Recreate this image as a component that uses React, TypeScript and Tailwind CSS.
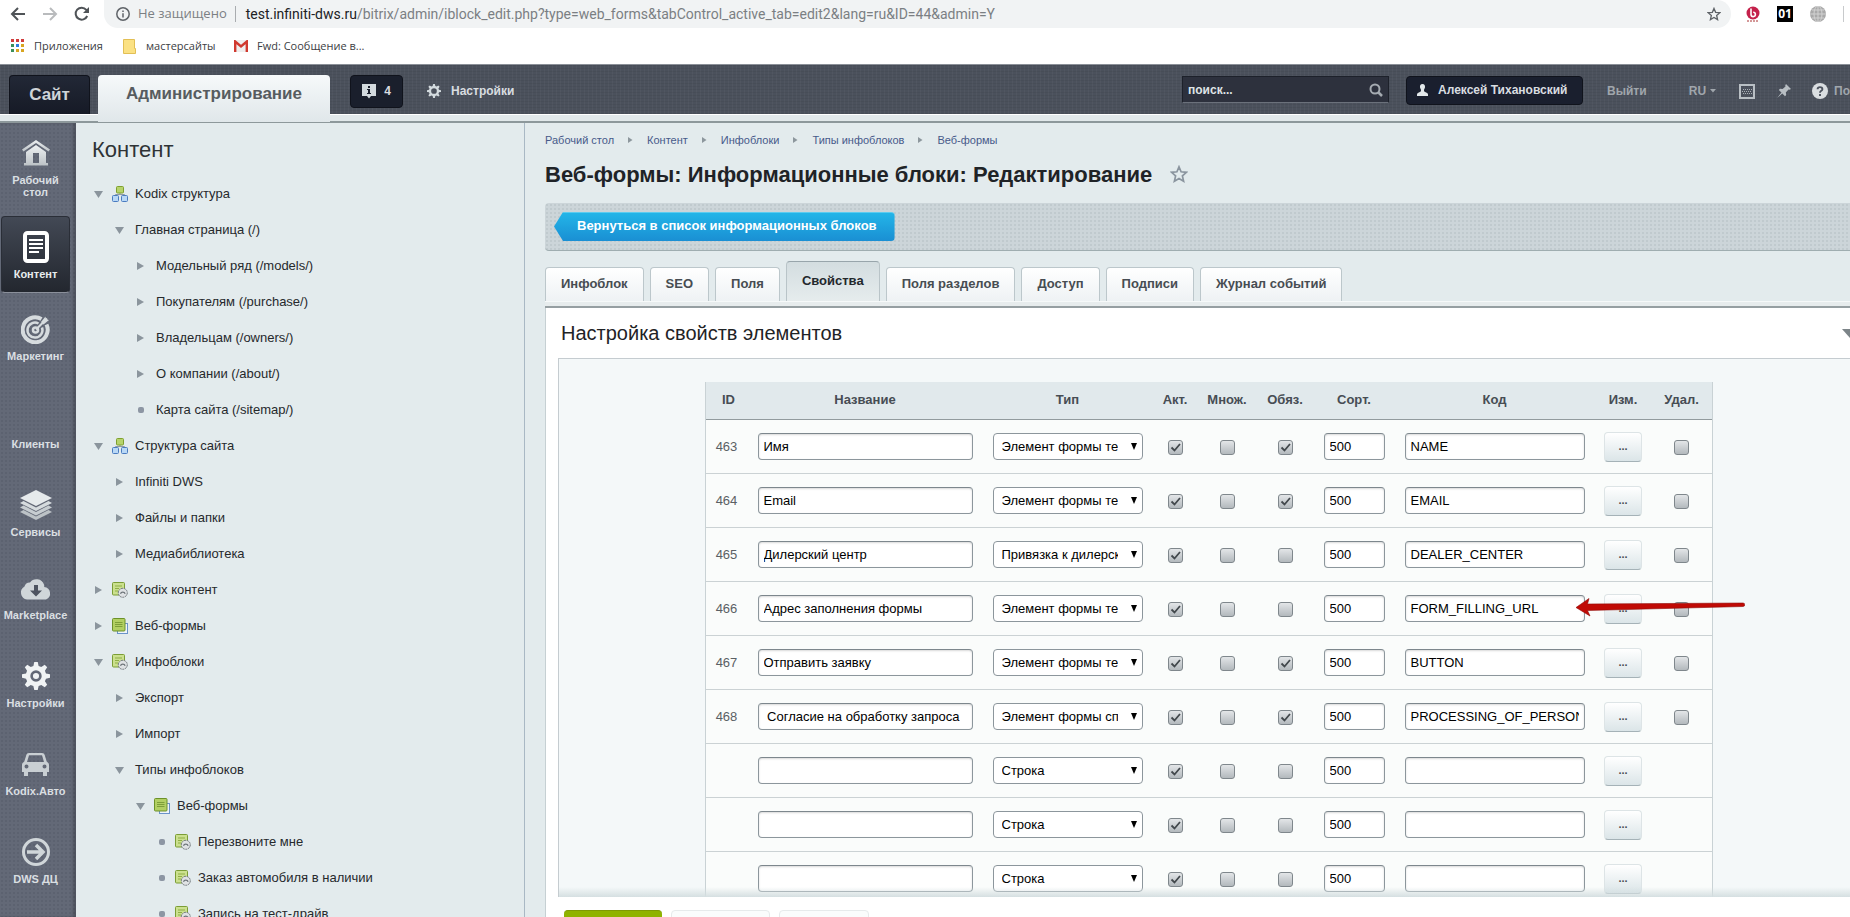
import React, { useState } from 'react';

type Marker = 'open' | 'closed' | 'dot';
type TreeIconName = 'structure' | 'settings' | 'forms';

interface TreeNode {
  label: string;
  level: number;
  marker: Marker;
  icon?: TreeIconName;
}

interface Property {
  id: string;
  name: string;
  type: string;
  active: boolean;
  multiple: boolean;
  required: boolean;
  code: string;
}

const TREE: TreeNode[] = [
  { label: 'Kodix структура', level: 0, marker: 'open', icon: 'structure' },
  { label: 'Главная страница (/)', level: 1, marker: 'open' },
  { label: 'Модельный ряд (/models/)', level: 2, marker: 'closed' },
  { label: 'Покупателям (/purchase/)', level: 2, marker: 'closed' },
  { label: 'Владельцам (/owners/)', level: 2, marker: 'closed' },
  { label: 'О компании (/about/)', level: 2, marker: 'closed' },
  { label: 'Карта сайта (/sitemap/)', level: 2, marker: 'dot' },
  { label: 'Структура сайта', level: 0, marker: 'open', icon: 'structure' },
  { label: 'Infiniti DWS', level: 1, marker: 'closed' },
  { label: 'Файлы и папки', level: 1, marker: 'closed' },
  { label: 'Медиабиблиотека', level: 1, marker: 'closed' },
  { label: 'Kodix контент', level: 0, marker: 'closed', icon: 'settings' },
  { label: 'Веб-формы', level: 0, marker: 'closed', icon: 'forms' },
  { label: 'Инфоблоки', level: 0, marker: 'open', icon: 'settings' },
  { label: 'Экспорт', level: 1, marker: 'closed' },
  { label: 'Импорт', level: 1, marker: 'closed' },
  { label: 'Типы инфоблоков', level: 1, marker: 'open' },
  { label: 'Веб-формы', level: 2, marker: 'open', icon: 'forms' },
  { label: 'Перезвоните мне', level: 3, marker: 'dot', icon: 'settings' },
  { label: 'Заказ автомобиля в наличии', level: 3, marker: 'dot', icon: 'settings' },
  { label: 'Запись на тест-драйв', level: 3, marker: 'dot', icon: 'settings' },
];

const LEVEL_PADDING = ['pl-[14px]', 'pl-[35px]', 'pl-[56px]', 'pl-[77px]'];

const PROPERTIES: Property[] = [
  { id: '463', name: 'Имя', type: 'Элемент формы текстовый', active: true, multiple: false, required: true, code: 'NAME' },
  { id: '464', name: 'Email', type: 'Элемент формы текстовый', active: true, multiple: false, required: true, code: 'EMAIL' },
  { id: '465', name: 'Дилерский центр', type: 'Привязка к дилерскому центру', active: true, multiple: false, required: false, code: 'DEALER_CENTER' },
  { id: '466', name: 'Адрес заполнения формы', type: 'Элемент формы текстовый', active: true, multiple: false, required: false, code: 'FORM_FILLING_URL' },
  { id: '467', name: 'Отправить заявку', type: 'Элемент формы текстовый', active: true, multiple: false, required: true, code: 'BUTTON' },
  { id: '468', name: ' Согласие на обработку запроса', type: 'Элемент формы список', active: true, multiple: false, required: true, code: 'PROCESSING_OF_PERSONAL_DATA' },
  { id: '', name: '', type: 'Строка', active: true, multiple: false, required: false, code: '' },
  { id: '', name: '', type: 'Строка', active: true, multiple: false, required: false, code: '' },
  { id: '', name: '', type: 'Строка', active: true, multiple: false, required: false, code: '' },
];

const TABS = ['Инфоблок', 'SEO', 'Поля', 'Свойства', 'Поля разделов', 'Доступ', 'Подписи', 'Журнал событий'];
const CRUMBS = ['Рабочий стол', 'Контент', 'Инфоблоки', 'Типы инфоблоков', 'Веб-формы'];

const GEAR =
  'M14 0h4l1 4.6 3 1.2 4-2.6 2.8 2.8-2.6 4 1.2 3 4.6 1v4l-4.6 1-1.2 3 2.6 4-2.8 2.8-4-2.6-3 1.2-1 4.6h-4l-1-4.6-3-1.2-4 2.6L3.2 26l2.6-4-1.2-3L0 18v-4l4.6-1 1.2-3-2.6-4L6 3.2l4 2.6 3-1.2zM16 9.5a6.5 6.5 0 1 0 0 13a6.5 6.5 0 1 0 0-13z';

const MENU = [
  { label: 'Рабочий стол', icon: 'home', height: 'h-[93px]' },
  { label: 'Контент', icon: 'content', height: 'h-[83px]' },
  { label: 'Маркетинг', icon: 'target', height: 'h-[88px]' },
  { label: 'Клиенты', icon: '', height: 'h-[88px]' },
  { label: 'Сервисы', icon: 'layers', height: 'h-[83px]' },
  { label: 'Marketplace', icon: 'cloud', height: 'h-[88px]' },
  { label: 'Настройки', icon: 'gear', height: 'h-[88px]' },
  { label: 'Kodix.Авто', icon: 'car', height: 'h-[88px]' },
  { label: 'DWS ДЦ', icon: 'arrow', height: 'h-[88px]' },
];

export default function App() {
  return (
    <div className="flex h-screen flex-col overflow-hidden bg-[#e3ebed] font-['Liberation_Sans',Arial,sans-serif] text-[13px] text-[#26292c]">
      <BrowserBar />
      <TopPanel />
      <div className="flex min-h-0 flex-1">
        <SideMenu />
        <Tree />
        <Editor />
      </div>
    </div>
  );
}

function BrowserBar() {
  return (
    <div className="shrink-0 bg-white font-['Open_Sans','Noto_Sans',sans-serif]">
      <div className="flex h-7 items-center pl-2.5">
        <div className="flex w-[94px] items-center gap-4">
          <button aria-label="Назад">
            <svg width="16" height="16" viewBox="0 0 16 16" fill="none" stroke="#4f5357" strokeWidth="2">
              <path d="M15 8H2.5M8 2L2 8l6 6" />
            </svg>
          </button>
          <button aria-label="Вперёд">
            <svg width="16" height="16" viewBox="0 0 16 16" fill="none" stroke="#b9bbbd" strokeWidth="2">
              <path d="M1 8h12.500M8 2l6 6-6 6" />
            </svg>
          </button>
          <button aria-label="Обновить">
            <svg width="16" height="16" viewBox="0 0 16 16" fill="none" stroke="#4f5357" strokeWidth="2">
              <path d="M13.200 10A6 6 0 1 1 12.300 3.800L14 5.500" />
              <path d="M15 1v6H9z" fill="#4f5357" stroke="none" />
            </svg>
          </button>
        </div>
        <div className="flex h-7 flex-1 items-center rounded-r-full rounded-bl-full bg-[#f1f3f4] pr-2.5 pl-3 text-[13px] text-[#7b7f83]">
          <svg className="shrink-0" width="14" height="14" viewBox="0 0 14 14" fill="none" stroke="#5f6368" strokeWidth="1.500">
            <circle cx="7" cy="7" r="6.200" />
            <path d="M7 6.200v4.300M7 3.500v1.500" />
          </svg>
          <span className="ml-2">Не защищено</span>
          <span className="mr-2.5 ml-2 h-4 w-px bg-[#a9acaf]" />
          <p className="flex-1 font-[Roboto,sans-serif] text-[14px] whitespace-nowrap">
            <span className="text-[#202124]">test.infiniti-dws.ru</span>
            /bitrix/admin/iblock_edit.php?type=web_forms&amp;tabControl_active_tab=edit2&amp;lang=ru&amp;ID=44&amp;admin=Y
          </p>
          <Star size={14} color="#5f6368" />
        </div>
        <div className="flex w-[119px] items-center gap-[17px] pl-[15px]">
          <svg width="14" height="16" viewBox="0 0 14 16">
            <circle cx="7" cy="7" r="6.500" fill="#c4214b" />
            <path d="M5 2.500v6a2.200 2.200 0 1 0 2.200-2.300" fill="none" stroke="#fff" strokeWidth="1.600" />
            <path d="M1 15h12" stroke="#a33" strokeWidth="1" strokeDasharray="2 1" />
          </svg>
          <span className="flex size-4 items-center justify-center bg-black text-[12px] font-bold text-white">01</span>
          <svg width="16" height="16" viewBox="0 0 16 16">
            <circle cx="8" cy="8" r="8" fill="#a9a9a9" />
            <path d="M8 0v16M0 8h16M2 4h12M2 12h12" stroke="#d2d2d2" fill="none" />
            <ellipse cx="8" cy="8" rx="4" ry="8" stroke="#d2d2d2" fill="none" />
          </svg>
          <span className="h-4 w-px bg-[#c8cacc]" />
        </div>
      </div>
      <div className="flex h-9 items-center pl-[11px] text-[11px] text-[#3c4043]">
        <svg width="14" height="14" viewBox="0 0 14 14">
          <path d="M0 0h3v3H0zM5 0h3v3H5zM10 0h3v3h-3z" fill="#d13c3c" />
          <path d="M0 5h3v3H0z" fill="#3a8f5b" />
          <path d="M5 5h3v3H5z" fill="#2f7de0" />
          <path d="M10 5h3v3h-3z" fill="#d8a520" />
          <path d="M0 10h3v3H0z" fill="#3a8f5b" />
          <path d="M5 10h3v3H5zM10 10h3v3h-3z" fill="#d8a520" />
        </svg>
        <a href="#" className="ml-[9px] w-[89px]">Приложения</a>
        <svg width="13" height="15" viewBox="0 0 13 15">
          <path d="M.5.500h11v9h1v5H.5z" fill="#fbe183" stroke="#e2bf55" />
        </svg>
        <a href="#" className="ml-[10px] w-[88px]">мастерсайты</a>
        <svg width="14" height="12" viewBox="0 0 14 12">
          <path d="M0 0h14v12H0z" fill="#eee" />
          <path d="M1.200 12V1.500L7 6.500l5.800-5V12" fill="none" stroke="#d0392f" strokeWidth="2.400" />
        </svg>
        <a href="#" className="ml-[9px]">Fwd: Сообщение в...</a>
      </div>
    </div>
  );
}

function TopPanel() {
  return (
    <header className="shrink-0">
      <div className="flex h-[50px] items-start border-t border-[#8b9098] bg-[#4b515c] bg-[repeating-linear-gradient(0deg,rgba(0,0,0,0.05)_0_1px,transparent_1px_3px),repeating-linear-gradient(90deg,rgba(255,255,255,0.03)_0_1px,transparent_1px_4px)] pl-[9px] text-[12px] font-bold text-[#d9dde0]">
        <a href="#" className="mt-2.5 flex h-[39px] w-[81px] items-center justify-center rounded-t border border-b-0 border-[#10131c] bg-linear-to-b from-[#222836] to-[#161a26] text-[17px] text-[#cfd4d8]">
          Сайт
        </a>
        <a href="#" className="relative z-10 mt-2.5 ml-2 flex h-[47px] w-[232px] justify-center rounded-t bg-linear-to-b from-[#f6f9fa] to-[#e0e7ea] pt-1.5 text-[17px] text-[#575c60]">
          Администрирование
        </a>
        <a href="#" className="mt-2.5 ml-5 flex h-[33px] w-[53px] items-center justify-center gap-2 rounded border border-[#10131c] bg-[#1a1f2c] pb-px">
          <svg width="14" height="15" viewBox="0 0 14 15">
            <path d="M0 0h14v12H9l-2 2.500L5 12H0z" fill="#d3dade" />
            <path d="M6 2h2v2H6zM5 5h3v4h1v1H5V9h1V6H5z" fill="#1a1f2c" />
          </svg>
          4
        </a>
        <a href="#" className="mt-2.5 ml-6 flex h-8 items-center gap-2.5">
          <svg width="14" height="14" viewBox="0 0 32 32" fill="#d3dade">
            <path fillRule="evenodd" d={GEAR} />
          </svg>
          Настройки
        </a>
        <label className="mt-[11px] ml-auto flex h-[27px] w-[207px] items-center border border-[#1d212a] border-b-[#6b717b] bg-[#2d313d] px-[5px]">
          <input aria-label="Поиск" placeholder="поиск..." className="min-w-0 flex-1 text-[12px] font-bold outline-none placeholder:text-[#dfe3e6]" />
          <svg width="14" height="14" viewBox="0 0 14 14" fill="none" stroke="#a5abb1" strokeWidth="2">
            <circle cx="6" cy="6" r="4.500" />
            <path d="M9 9l4 4" strokeWidth="2.500" />
          </svg>
        </label>
        <a href="#" className="mt-[11px] ml-[17px] flex h-[29px] w-[177px] items-center gap-2.5 rounded border border-[#10131c] bg-[#1a1f2e] pb-0.5 pl-2.5">
          <svg width="11" height="12" viewBox="0 0 11 12" fill="#e3e8ea">
            <path d="M5.500 0C7.500 0 8.200 1.500 8 3.200 7.800 4.600 7 5 7 6.500c0 2 4 1.800 4 4V12H0v-1.500c0-2.200 4-2 4-4C4 5 3.200 4.600 3 3.200 2.800 1.500 3.500 0 5.500 0z" />
          </svg>
          Алексей Тихановский
        </a>
        <nav className="mt-2.5 ml-6 flex h-8 w-[243px] items-center text-[#a0a6ac]">
          <a href="#" className="w-[83px]">Выйти</a>
          <button className="flex w-[51px] items-center gap-1">
            RU
            <svg width="6" height="4" viewBox="0 0 6 4" fill="#a0a6ac">
              <path d="M0 0h6L3 3.500z" />
            </svg>
          </button>
          <button aria-label="Клавиатура">
            <svg width="16" height="15" viewBox="0 0 16 15" fill="none">
              <path d="M1 1h14v13H1z" stroke="#b9bfc4" strokeWidth="2" />
              <path d="M4 5.500h9M3 7.500h9M4 9.500h9" stroke="#a9afb5" strokeDasharray="1 1" />
            </svg>
          </button>
          <button aria-label="Закрепить" className="ml-[22px]">
            <svg width="14" height="14" viewBox="0 0 14 14" fill="#b9bfc4">
              <path d="M9 0l5 5-1.500.8-1-.3-2.700 2.900.4 2.600-1.200 1.200-2.700-2.800L0 14l4.500-5.400L1.800 6 3 4.700l2.600.4 2.900-2.700-.3-1z" />
            </svg>
          </button>
          <a href="#" className="ml-[21px] flex items-center gap-1.5">
            <svg width="16" height="16" viewBox="0 0 16 16">
              <circle cx="8" cy="8" r="8" fill="#d9dde0" />
              <path d="M5.600 6.300C5.600 3.300 10.400 3.400 10.400 6.200 10.400 8 8 7.700 8 9.800M8 11v2" fill="none" stroke="#4b515c" strokeWidth="1.900" />
            </svg>
            По
          </a>
        </nav>
      </div>
      <div className="h-[9px] border-t border-b-2 border-t-white border-b-[#8d989b] bg-[#e1e8ea]" />
    </header>
  );
}

function SideMenu() {
  return (
    <nav className="w-[76px] shrink-0 overflow-hidden bg-[#636977] bg-[radial-gradient(#5c6270_1px,transparent_1px)] bg-size-[4px_4px] shadow-[inset_-3px_0_3px_rgba(0,0,0,0.2)]">
      {MENU.map((item) => (
        <div key={item.label} className={item.height}>
          <a
            href="#"
            className={`ml-px flex h-[77px] w-[69px] flex-col items-center rounded pt-3.5 text-center text-[11px] leading-3 font-bold ${
              item.label === 'Контент'
                ? 'border border-[#2a2e37] border-b-[#8b909b] bg-linear-to-b from-[#434955] to-[#23272f] text-[#e8ecee]'
                : 'text-[#dadfe2]'
            }`}
          >
            <span className="mb-[5px] flex h-8 shrink-0 items-center">
              <MenuIcon name={item.icon} />
            </span>
            {item.label}
          </a>
        </div>
      ))}
    </nav>
  );
}

function MenuIcon({ name }: { name: string }) {
  if (name === 'home') {
    return (
      <svg width="28" height="26" viewBox="0 0 28 26" fill="url(#metal)">
        <defs>
          <linearGradient id="metal" x1="0" y1="0" x2="0" y2="1">
            <stop offset="0" stopColor="#eef1f2" />
            <stop offset="1" stopColor="#bcc2c6" />
          </linearGradient>
        </defs>
        <path d="M14 0l14 9.500-1.500 2L14 3 1.500 11.500 0 9.500z" />
        <path fillRule="evenodd" d="M14 5l10 7v11h2v2.500H2V23h2V12zM11 13v10h6V13z" />
      </svg>
    );
  }
  if (name === 'content') {
    return (
      <svg width="26" height="32" viewBox="0 0 26 32" fill="none" stroke="#fff">
        <rect x="2" y="2" width="22" height="28" rx="2.500" strokeWidth="4" />
        <path d="M6 9h14M6 13h14M6 17h14M6 21h10" strokeWidth="2" />
      </svg>
    );
  }
  if (name === 'target') {
    return (
      <svg width="29" height="29" viewBox="0 0 29 29" fill="none" stroke="#d6dbde">
        <path d="M20.500 4A12.500 12.500 0 1 0 25.500 9.500" strokeWidth="4" />
        <path d="M17.500 8.500A7.500 7.500 0 1 0 21 12.500" strokeWidth="2.500" />
        <circle cx="14.500" cy="15" r="2.500" strokeWidth="2.500" />
        <path d="M15 14.500L26 3.500" strokeWidth="2.200" />
        <path d="M20 7l4.500-5.500.5 3 3 .5-5.500 4.500z" fill="#d6dbde" stroke="none" />
      </svg>
    );
  }
  if (name === 'layers') {
    return (
      <svg width="32" height="30" viewBox="0 0 32 30" fill="#d6dbde">
        <path d="M16 0l16 8-16 8L0 8z" fill="#e6eaec" />
        <path d="M0 13l3.500-2L16 17.500 28.500 11l3.500 2-16 8z" />
        <path d="M0 17.500l3.500-2L16 22l12.500-6.500 3.500 2-16 8z" fill="#c6ccd0" />
        <path d="M0 22l3.500-2L16 26.500 28.500 20l3.500 2-16 8z" fill="#bcc2c6" />
      </svg>
    );
  }
  if (name === 'cloud') {
    return (
      <svg width="32" height="23" viewBox="0 0 32 23">
        <path d="M7 22.500a7 7 0 0 1-2.500-13A5.500 5.500 0 0 1 10 5.500 8 8 0 0 1 24 7.500c.3 1 .3 1.500.2 2.500A6.500 6.500 0 0 1 26 22.500z" fill="#d0d6d9" />
        <path d="M14 8h4v5.500h4L16 19.500l-6-6h4z" fill="#4e5460" />
      </svg>
    );
  }
  if (name === 'gear') {
    return (
      <svg width="28" height="28" viewBox="0 0 32 32" fill="#f0f3f4">
        <path fillRule="evenodd" d={GEAR} />
        <circle cx="16" cy="16" r="3.500" />
      </svg>
    );
  }
  if (name === 'car') {
    return (
      <svg width="27" height="23" viewBox="0 0 27 23" fill="#c9cfd3">
        <path
          fillRule="evenodd"
          d="M7 0h13c1.500 0 2.300.8 2.700 2l2 6.500C26 9.500 27 10.500 27 12v7h-2v4h-4v-4H6v4H2v-4H0v-7c0-1.500 1-2.500 2.300-3.500l2-6.500C4.700.8 5.500 0 7 0zM7 2.200L5 9h17l-2-6.800zM4.500 11.500a2 2 0 1 0 0 4 2 2 0 1 0 0-4zM22.500 11.500a2 2 0 1 0 0 4 2 2 0 1 0 0-4z"
        />
      </svg>
    );
  }
  if (name === 'arrow') {
    return (
      <svg width="28" height="28" viewBox="0 0 28 28" fill="none" stroke="#d0d6d9" strokeWidth="3">
        <circle cx="14" cy="14" r="12.500" />
        <path d="M5 14h15M14 7l7 7-7 7" strokeWidth="3.500" />
      </svg>
    );
  }
  return null;
}

function Tree() {
  return (
    <aside className="w-[449px] shrink-0 overflow-hidden border-r border-[#a9b8c4]">
      <h2 className="h-[53px] pl-4 text-[22px] leading-[54px] text-[#2f3336]">Контент</h2>
      <ul>
        {TREE.map((node, i) => (
          <li key={i} className={`flex h-9 items-center ${LEVEL_PADDING[node.level]}`}>
            <span className="flex w-[17px] justify-center">
              <TreeMarker marker={node.marker} />
            </span>
            {node.icon && (
              <span className="ml-[5px]">
                <TreeIcon name={node.icon} />
              </span>
            )}
            <a href="#" className="ml-[7px]">
              {node.label}
            </a>
          </li>
        ))}
      </ul>
    </aside>
  );
}

function TreeMarker({ marker }: { marker: Marker }) {
  if (marker === 'dot') return <span className="size-1.5 rounded-[2px] bg-[#8d96a3]" />;
  return (
    <svg width="9" height="8" viewBox="0 0 9 8" fill="#8b959d">
      <path d={marker === 'open' ? 'M0 1h9L4.500 8z' : 'M1 0l7 4-7 4z'} />
    </svg>
  );
}

function TreeIcon({ name }: { name: TreeIconName }) {
  if (name === 'structure') {
    return (
      <svg width="16" height="16" viewBox="0 0 16 16">
        <path d="M8 7v2M3.500 10V8.500h9V10" fill="none" stroke="#8f9aa3" />
        <rect x="4.500" y=".5" width="7" height="6.500" rx="1" fill="#b6d36b" stroke="#7fa02f" />
        <rect x=".5" y="9.500" width="6" height="6" rx="1" fill="#b9d8f6" stroke="#4a7cc0" />
        <rect x="9.500" y="9.500" width="6" height="6" rx="1" fill="#b9d8f6" stroke="#4a7cc0" />
      </svg>
    );
  }
  if (name === 'forms') {
    return (
      <svg width="16" height="16" viewBox="0 0 16 16">
        <rect x="5.500" y="5.500" width="10" height="10" fill="#eef4fa" stroke="#6b93c9" />
        <rect x=".5" y=".5" width="12.500" height="12.500" rx="1" fill="#b2cf62" stroke="#6c9128" />
        <path d="M3 4.500h7.500M3 6.500h7.500M3 8.500h7.500" stroke="#7d9e38" />
      </svg>
    );
  }
  return (
    <svg width="16" height="16" viewBox="0 0 16 16">
      <rect x=".5" y=".5" width="12" height="12.500" rx="1" fill="#cbe08e" stroke="#7b9d35" />
      <path d="M3 4h7M3 6.500h4M3 9h3" stroke="#8fae45" />
      <circle cx="10.800" cy="10.800" r="4.500" fill="#dfe2e4" stroke="#6d7479" strokeDasharray="2 .7" />
      <path d="M8.500 11.800a2.400 2.400 0 0 1 4.600 0" fill="none" stroke="#6d7479" strokeWidth="1.300" />
    </svg>
  );
}

function Editor() {
  const [activeTab, setActiveTab] = useState('Свойства');

  return (
    <main className="-mr-2 flex min-w-0 flex-1 flex-col pl-5">
      <nav className="flex h-[34px] shrink-0 items-center text-[11px] text-[#475a8a]">
        {CRUMBS.map((crumb, i) => (
          <React.Fragment key={crumb}>
            {i > 0 && (
              <svg className="mx-3.5" width="5" height="6" viewBox="0 0 5 6" fill="#8d979d">
                <path d="M0 0l4.500 3L0 6z" />
              </svg>
            )}
            <a href="#">{crumb}</a>
          </React.Fragment>
        ))}
      </nav>

      <div className="mb-3 flex h-[34px] shrink-0 items-center gap-[18px]">
        <h1 className="text-[22px] font-bold text-[#1f2327]">Веб-формы: Информационные блоки: Редактирование</h1>
        <Star size={18} color="#8b959f" />
      </div>

      {/* Toolbar */}
      <div className="flex h-12 shrink-0 items-center rounded-l border-b border-[#9fadb0] bg-[#ccd5d9] bg-[radial-gradient(#c0cace_1px,transparent_1px)] bg-size-[4px_4px] pl-[9px]">
        <a
          href="#"
          className="flex h-[29px] items-center rounded-r-sm border-t border-[#5cccf0] bg-linear-to-b from-[#24b5e8] to-[#1a8fd3] pr-[18px] pb-0.5 pl-[23px] font-bold text-white [clip-path:polygon(9px_0,100%_0,100%_100%,9px_100%,0_50%)]"
        >
          Вернуться в список информационных блоков
        </a>
      </div>

      {/* Tabs */}
      <div className="mt-2.5 flex h-10 shrink-0 items-end gap-1.5">
        {TABS.map((tab) => (
          <button
            key={tab}
            onClick={() => setActiveTab(tab)}
            className={`rounded-t border border-b-0 px-[15px] pb-0.5 font-bold ${
              tab === activeTab
                ? 'h-10 border-[#b9c4c8] border-t-[#98a5ab] bg-linear-to-b from-[#d3dde0] to-[#e6eced] text-[#23282c]'
                : 'h-[34px] border-[#bcc7cb] bg-linear-to-b from-white to-[#eef2f4] text-[#474d52]'
            }`}
          >
            {tab}
          </button>
        ))}
      </div>
      <div className="h-[7px] shrink-0 border-t border-b-2 border-t-[#f6f9f9] border-b-[#969fa2] bg-[#e7eced]" />

      <section className="flex min-h-0 flex-1 flex-col overflow-hidden border-l border-[#c6d0d3] bg-white">
        <div className="flex h-[50px] shrink-0 items-center pl-[15px]">
          <h2 className="text-[20px] text-[#1f2326]">Настройка свойств элементов</h2>
          <button aria-label="Свернуть" className="ml-auto">
            <svg width="16" height="9" viewBox="0 0 16 9" fill="#7c8488">
              <path d="M0 0h16L8 9z" />
            </svg>
          </button>
        </div>
        <div className="relative ml-3 min-h-0 flex-1 overflow-hidden border-t border-l border-[#c5ccd0] bg-[#f4f8f9] pt-[23px]">
          <PropertyTable />
          <div className="absolute inset-x-0 bottom-0 z-20 h-2.5 bg-linear-to-b from-transparent to-[#d5dfe1]" />
        </div>
        <div className="flex h-5 shrink-0 gap-[9px] overflow-hidden bg-white pt-[13px] pl-[18px]">
          <button aria-label="Сохранить" className="h-8 w-[98px] shrink-0 rounded border-t border-[#7d9a05] bg-[#8fb300]" />
          <button aria-label="Применить" className="h-8 w-[99px] shrink-0 rounded border border-[#e6eaeb] bg-[#fafcfc]" />
          <button aria-label="Отменить" className="h-8 w-[90px] shrink-0 rounded border border-[#e6eaeb] bg-[#fafcfc]" />
        </div>
      </section>
    </main>
  );
}

function PropertyTable() {
  return (
    <table className="mx-auto w-[1008px] table-fixed border-separate border-spacing-0 border-x border-[#c9d2d5] bg-[#fafcfb] text-center">
      <colgroup>
        <col className="w-[42px]" />
        <col className="w-[235px]" />
        <col className="w-[170px]" />
        <col className="w-[45px]" />
        <col className="w-[59px]" />
        <col className="w-[57px]" />
        <col className="w-[81px]" />
        <col className="w-[200px]" />
        <col className="w-[57px]" />
        <col className="w-[60px]" />
      </colgroup>
      <thead>
        <tr className="h-[38px] text-[#474d54]">
          {['ID', 'Название', 'Тип', 'Акт.', 'Множ.', 'Обяз.', 'Сорт.', 'Код', 'Изм.', 'Удал.'].map((title) => (
            <th key={title} className="border-b border-[#929b9e] bg-[#e1e9ec] p-0 pb-0.5 font-bold first:pl-1">
              {title}
            </th>
          ))}
        </tr>
      </thead>
      <tbody>
        {PROPERTIES.map((prop, i) => (
          <PropertyRow key={i} prop={prop} />
        ))}
      </tbody>
    </table>
  );
}

const CELL = 'border-b border-[#cbd2d4] p-0';
const INPUT =
  'h-[27px] rounded border border-[#8c969c] border-t-[#7d878d] bg-white px-[5px] align-middle text-black shadow-[inset_0_1px_2px_rgba(0,0,0,0.15)] outline-none';

function PropertyRow({ prop }: { prop: Property }) {
  return (
    <tr className="h-[54px]">
      <td className={`${CELL} text-[#5a6064]`}>{prop.id}</td>
      <td className={CELL}>
        <input aria-label="Название" defaultValue={prop.name} className={`${INPUT} w-[215px]`} />
      </td>
      <td className={CELL}>
        <span className="relative inline-block align-middle">
          <select aria-label="Тип" className="block h-[27px] w-[150px] appearance-none rounded border border-[#8c969c] bg-white pr-6 pl-2 text-black outline-none">
            <option>{prop.type}</option>
          </select>
          <svg className="pointer-events-none absolute top-2.5 right-1.5" width="6" height="7" viewBox="0 0 6 7">
            <path d="M0 0h6L3 7z" />
          </svg>
        </span>
      </td>
      <td className={CELL}>
        <Checkbox label="Акт." checked={prop.active} />
      </td>
      <td className={CELL}>
        <Checkbox label="Множ." checked={prop.multiple} />
      </td>
      <td className={CELL}>
        <Checkbox label="Обяз." checked={prop.required} />
      </td>
      <td className={CELL}>
        <input aria-label="Сорт." defaultValue="500" className={`${INPUT} w-[61px]`} />
      </td>
      <td className={`${CELL} relative`}>
        <input aria-label="Код" defaultValue={prop.code} className={`${INPUT} w-[180px]`} />
        {prop.id === '466' && (
          <svg className="pointer-events-none absolute top-4 left-[181px] z-10" width="169" height="20" viewBox="0 0 169 20" fill="#c00a05" stroke="#8f0a06" strokeWidth=".6">
            <path d="M0 9.500L13 .5 11.500 6 167 5a1.500 1.500 0 0 1 0 3.500L11.500 12.500 14 18z" />
          </svg>
        )}
      </td>
      <td className={CELL}>
        <button
          aria-label="Изменить"
          className="h-[30px] w-[38px] rounded border border-[#dde4e6] border-b-[#a5b2b7] bg-linear-to-b from-white to-[#dbe5e8] align-middle text-[11px] font-bold text-[#474d52]"
        >
          ...
        </button>
      </td>
      <td className={CELL}>{prop.id && <Checkbox label="Удал." checked={false} />}</td>
    </tr>
  );
}

function Checkbox({ label, checked }: { label: string; checked: boolean }) {
  return (
    <span className="relative inline-block size-[15px] align-middle">
      <input
        type="checkbox"
        aria-label={label}
        defaultChecked={checked}
        className="peer block size-[15px] appearance-none rounded-[3px] border border-[#7f878c] bg-linear-to-b from-[#e3e6e8] to-[#b3b9bd]"
      />
      <svg className="pointer-events-none absolute inset-0 hidden peer-checked:block" width="15" height="15" viewBox="0 0 15 15" fill="none" stroke="#42484c" strokeWidth="1.800">
        <path d="M3.500 7.500l3 3L12 4" />
      </svg>
    </span>
  );
}

function Star({ size, color }: { size: number; color: string }) {
  return (
    <svg className="shrink-0" width={size} height={size} viewBox="0 0 18 18" fill="none" stroke={color} strokeWidth="1.700">
      <path d="M9 1.800l2.100 5 5.400.5-4.100 3.600 1.200 5.300L9 13.400l-4.600 2.800 1.200-5.300L1.500 7.300l5.400-.5z" />
    </svg>
  );
}
